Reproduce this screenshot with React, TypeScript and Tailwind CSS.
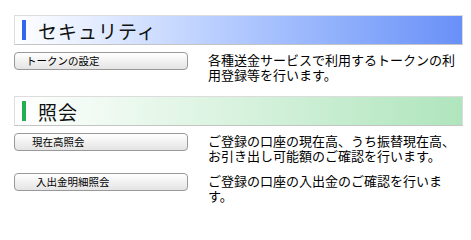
const jp = "font-['Noto_Sans_CJK_JP','Noto_Sans',sans-serif]"

function SectionHeader({ title, bar, to }: { title: string; bar: string; to: string }) {
  return (
    <div
      className={`flex h-[30px] items-center border border-[#dcdcdc] border-b-[#c4c4c4] bg-gradient-to-r from-white ${to}`}
    >
      <span className={`ml-[7px] h-[20px] w-[4px] ${bar}`} />
      <h2 className={`ml-[12px] text-[19px] leading-none tracking-[1px] text-[#111] ${jp}`}>{title}</h2>
    </div>
  )
}

function MenuRow({ label, pad, desc }: { label: string; pad: string; desc: string }) {
  return (
    <div className="flex items-start">
      <button
        className={`h-[18px] w-[174px] shrink-0 rounded-[4px] border border-[#999] bg-gradient-to-b from-white to-[#e4e4e4] text-left text-[10.5px] leading-none text-black ${pad} ${jp}`}
      >
        {label}
      </button>
      <p className={`ml-[20px] w-[252px] text-[13px] leading-[15px] text-black ${jp}`}>{desc}</p>
    </div>
  )
}

export default function App() {
  return (
    <div className="h-[214px] w-[471px] overflow-hidden bg-white pl-[14px] pr-[8px] pt-[15px]">
      {/* セキュリティ */}
      <SectionHeader title="セキュリティ" bar="bg-[#3366f0]" to="to-[#6990f7]" />
      <div className="mt-[7px]">
        <MenuRow
          label="トークンの設定"
          pad="pl-[11px]"
          desc="各種送金サービスで利用するトークンの利用登録等を行います。"
        />
      </div>

      {/* 照会 */}
      <div className="mt-[14px]">
        <SectionHeader title="照会" bar="bg-[#22b04e]" to="to-[#afe5bd]" />
      </div>
      <div className="mt-[7px] flex flex-col gap-[10px]">
        <MenuRow
          label="現在高照会"
          pad="pl-[17px]"
          desc="ご登録の口座の現在高、うち振替現在高、お引き出し可能額のご確認を行います。"
        />
        <MenuRow
          label="入出金明細照会"
          pad="pl-[21px]"
          desc="ご登録の口座の入出金のご確認を行います。"
        />
      </div>
    </div>
  )
}
